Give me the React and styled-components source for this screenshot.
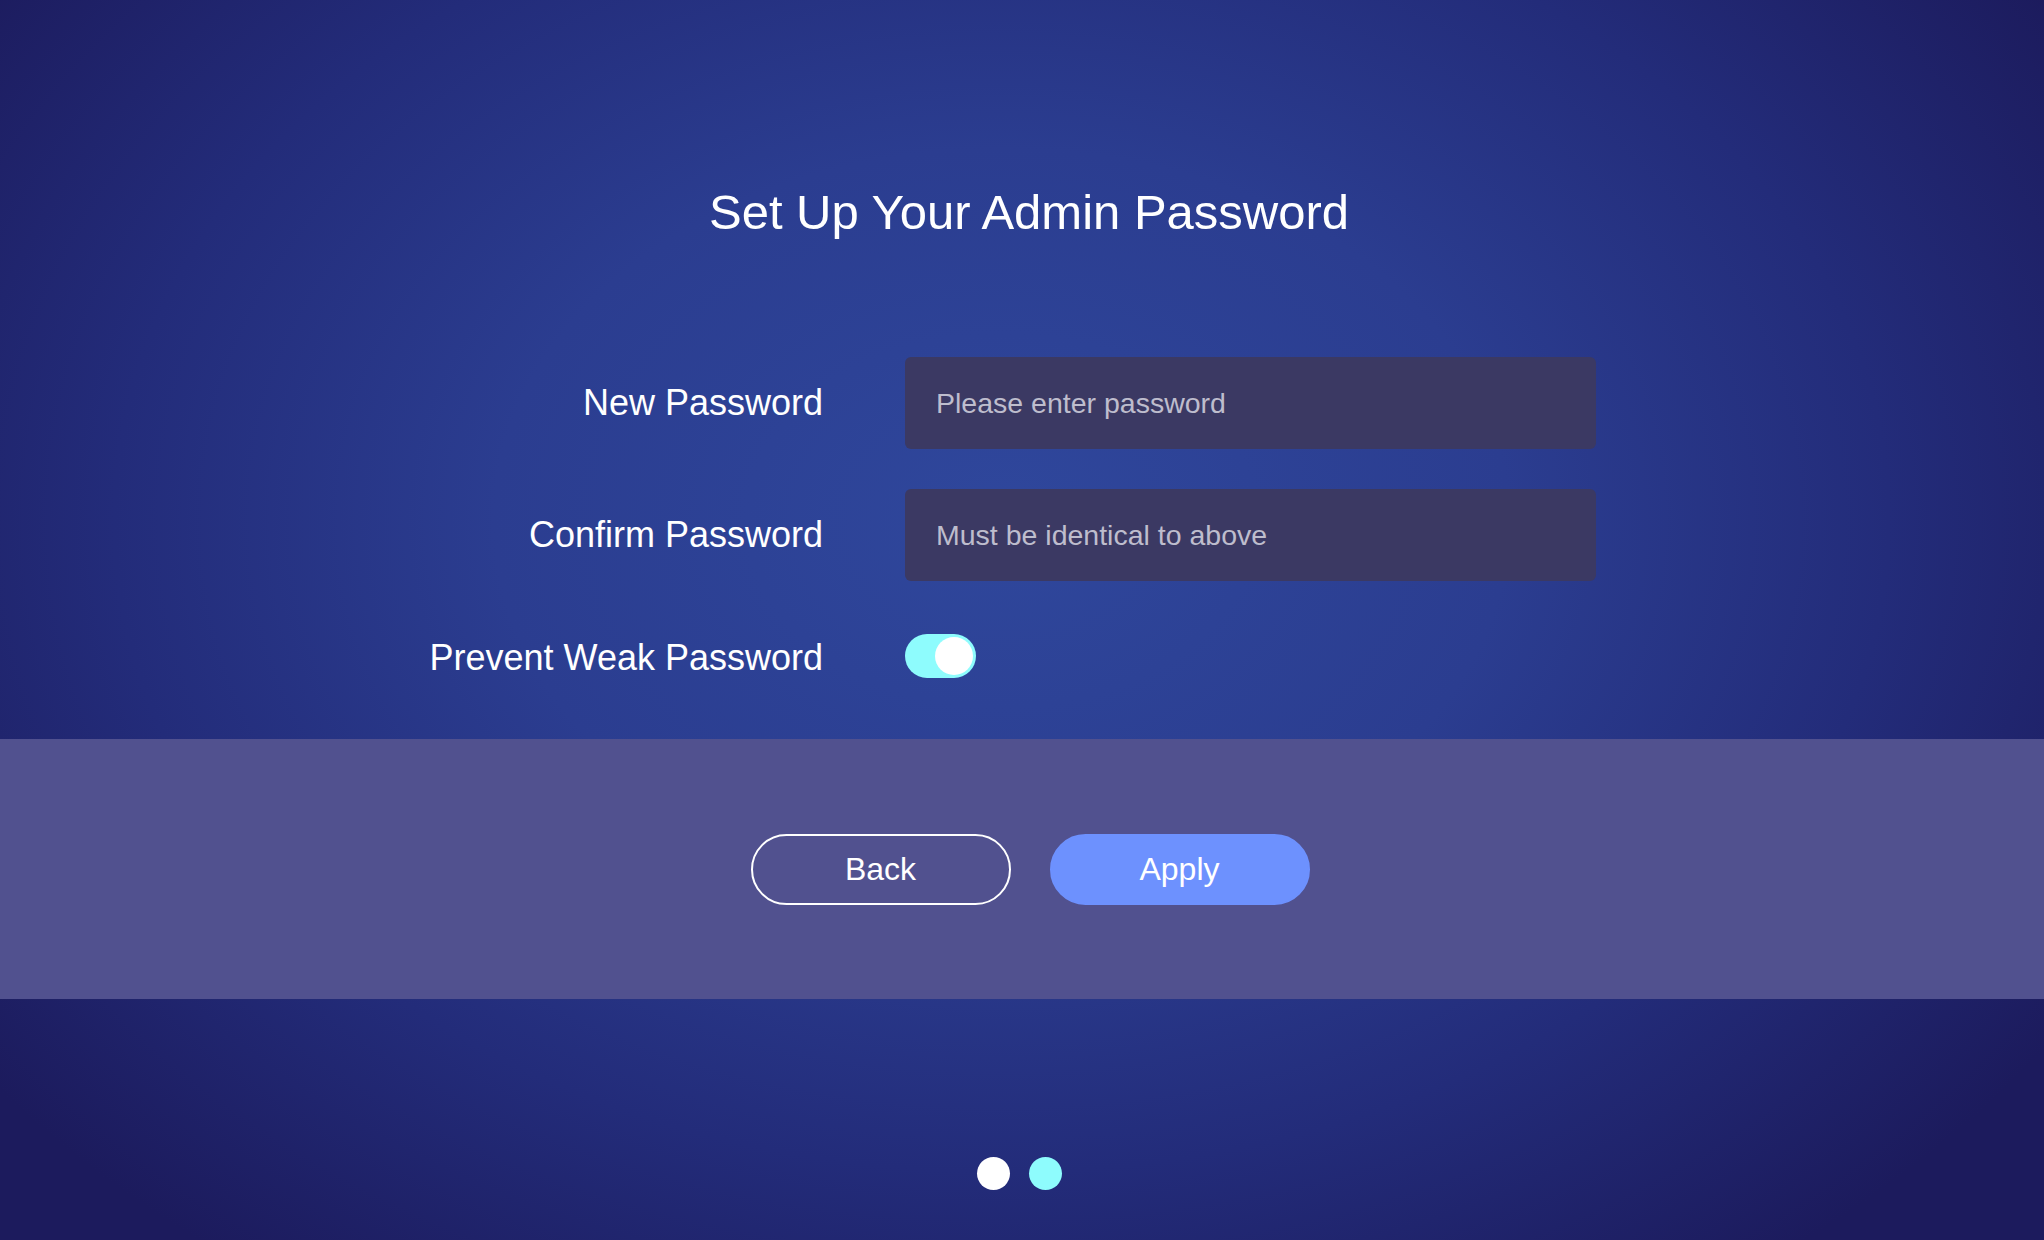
import React from "react";
import styled, { createGlobalStyle } from "styled-components";

const GlobalStyle = createGlobalStyle`
	html, body {
		margin: 0;
		padding: 0;
		height: 100%;
	}
	body {
		font-family: "Liberation Sans", Arial, Helvetica, sans-serif;
		overflow: hidden;
	}
	* {
		box-sizing: border-box;
	}
`;

const Page = styled.main`
	height: 100vh;
	display: flex;
	flex-direction: column;
	align-items: center;
	background: radial-gradient(
		ellipse 62% 75% at 49% 42%,
		#2f479c 0%,
		#2b3d90 40%,
		#232c7a 70%,
		#1c1b5d 100%
	);
	color: #fff;
`;

const Title = styled.h1`
	margin: 184px 0 0;
	padding-left: 14px;
	font-size: 49px;
	line-height: 56px;
	font-weight: 400;
`;

const Form = styled.form`
	margin-top: 117px;
	padding-right: 15px;
	display: grid;
	grid-template-columns: 390px 691px;
	column-gap: 82px;
	row-gap: 40px;
	align-items: center;
`;

const Label = styled.label`
	justify-self: end;
	font-size: 36px;
	line-height: 44px;
	margin-top: ${(p) => (p.$spaced ? "13px" : "0")};
	white-space: nowrap;
`;

const Input = styled.input`
	width: 100%;
	height: 92px;
	padding: 0 31px;
	border: none;
	border-radius: 6px;
	background: #3b3963;
	color: #fff;
	caret-color: #fff;
	font-family: inherit;
	font-size: 28.5px;
	outline: none;
	&::placeholder {
		color: #bebdcd;
	}
`;

const Switch = styled.button`
	position: relative;
	margin-top: 13px;
	width: 71px;
	height: 44px;
	padding: 0;
	border: none;
	border-radius: 22px;
	background: ${(p) => (p.$on ? "#8efcfd" : "#6b6a93")};
	cursor: pointer;
	&::after {
		content: "";
		position: absolute;
		top: 3px;
		left: ${(p) => (p.$on ? "30px" : "3px")};
		width: 38px;
		height: 38px;
		border-radius: 50%;
		background: #fff;
	}
`;

const Band = styled.section`
	margin-top: 57px;
	width: 100%;
	height: 260px;
	padding-left: 16px;
	background: #51518f;
	display: flex;
	align-items: center;
	justify-content: center;
	gap: 39px;
`;

const Button = styled.button`
	width: 260px;
	height: 71px;
	border-radius: 36px;
	font-family: inherit;
	font-size: 32px;
	color: #fff;
	cursor: pointer;
	border: 2px solid ${(p) => (p.$primary ? "#6d91fe" : "#fff")};
	background: ${(p) => (p.$primary ? "#6d91fe" : "transparent")};
`;

const Dots = styled.nav`
	margin-top: 158px;
	padding-right: 6px;
	display: flex;
	gap: 19px;
`;

const Dot = styled.span`
	width: 33px;
	height: 33px;
	border-radius: 50%;
	background: ${(p) => (p.$active ? "#8efcfd" : "#fff")};
`;

export default function App() {
	const [strict, setStrict] = React.useState(true);
	return (
		<>
			<GlobalStyle />
			<Page>
				<Title>Set Up Your Admin Password</Title>
				<Form onSubmit={(e) => e.preventDefault()}>
					<Label htmlFor='pw'>New Password</Label>
					<Input id='pw' type='password' placeholder='Please enter password' autoFocus />
					<Label htmlFor='pw2'>Confirm Password</Label>
					<Input id='pw2' type='password' placeholder='Must be identical to above' />
					<Label $spaced>Prevent Weak Password</Label>
					<div>
						<Switch type='button' $on={strict} onClick={() => setStrict(!strict)} />
					</div>
				</Form>
				<Band>
					<Button>Back</Button>
					<Button $primary>Apply</Button>
				</Band>
				<Dots>
					<Dot />
					<Dot $active />
				</Dots>
			</Page>
		</>
	);
}
